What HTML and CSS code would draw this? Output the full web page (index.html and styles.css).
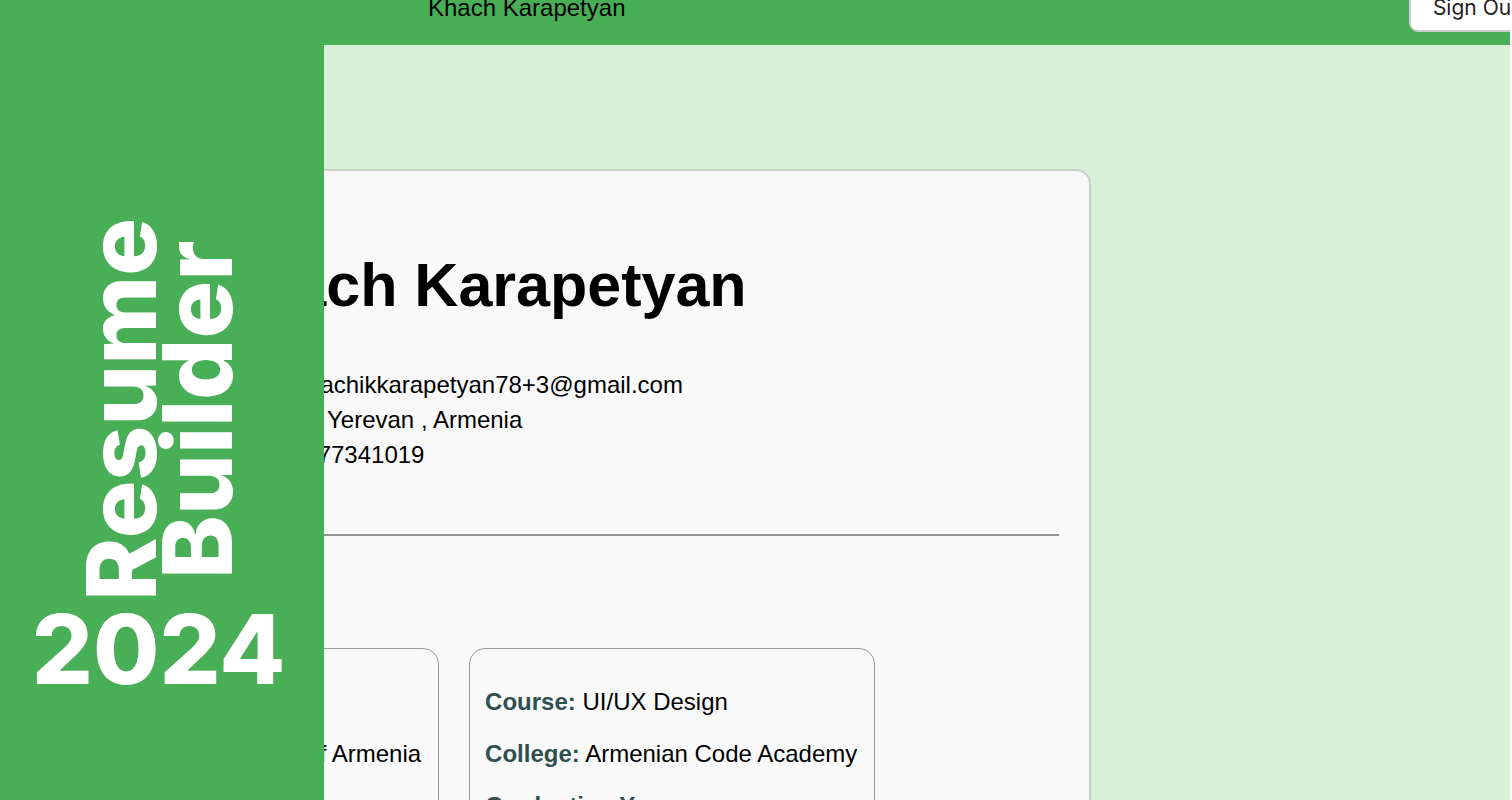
FILE: index.html
```
<!DOCTYPE html>
<html lang="en">
<head>
<meta charset="utf-8">
<title>Resume Builder</title>
<link rel="stylesheet" href="styles.css">
</head>
<body>
<div class="page">
  <aside class="sidebar">
    <div class="brand">Resume<br>Builder</div>
    <div class="year">2024</div>
  </aside>
  <header class="topbar">
    <span class="user">Khach Karapetyan</span>
    <button class="sign-out" type="button">Sign Out</button>
  </header>
  <main class="resume">
    <section class="person">
      <h1 class="name">Khach Karapetyan</h1>
      <dl class="contacts">
        <div class="contact"><dt>Email:</dt><dd>khachikkarapetyan78+3@gmail.com</dd></div>
        <div class="contact"><dt>Address:</dt><dd>Yerevan , Armenia</dd></div>
        <div class="contact"><dt>Phone:</dt><dd>077341019</dd></div>
      </dl>
    </section>
    <hr class="divider">
    <section class="education">
      <article class="school">
        <p><strong>Course:</strong> Design</p>
        <p><strong>College:</strong> University of Armenia</p>
        <p><strong>Graduation Year:</strong></p>
      </article>
      <article class="school">
        <p><strong>Course:</strong> UI/UX Design</p>
        <p><strong>College:</strong> Armenian Code Academy</p>
        <p><strong>Graduation Year:</strong></p>
      </article>
    </section>
  </main>
</div>
</body>
</html>
```
FILE: styles.css
```
* { box-sizing: border-box; }

body {
  margin: 0;
  background: #fff;
  color: #000;
  font: 24px/28px "Liberation Sans", Arial, sans-serif;
}

.page {
  height: 100vh;
  margin-right: 2px;
  overflow: hidden;
  background: #d7f0d8;
}

.sidebar {
  position: fixed;
  top: 0;
  bottom: 0;
  left: 0;
  z-index: 1;
  width: 324px;
  padding: 0 7px 107px 0;
  display: flex;
  flex-direction: column;
  align-items: center;
  justify-content: flex-end;
  background: #49af57;
  color: #fff;
  font: 800 96px/76px Inter, sans-serif;
}

.brand {
  margin-bottom: 4px;
  writing-mode: vertical-rl;
  transform: rotate(180deg);
  text-align: center;
}

.year { line-height: 88px; }

.topbar {
  height: 74px;
  margin-top: -29px;
  padding-left: 428px;
  display: flex;
  align-items: center;
  justify-content: space-between;
  background: #49af57;
}

.sign-out {
  height: 48px;
  margin-right: -32px;
  padding: 0 22px;
  border: 2px solid #ccc;
  border-radius: 9px;
  background: #fff;
  color: #222;
  font: 21px/26px Inter, sans-serif;
}

.resume {
  margin: 124px 419px 0 45px;
  padding: 78px 30px 30px;
  border: 2px solid #ccc;
  border-radius: 15px;
  background: #f9f9f9;
}

.person { padding-left: 134px; }

.name {
  margin: 0 0 46px;
  font-size: 61px;
  line-height: 72px;
}

.contacts { margin: 0 0 62px; }

.contact {
  display: flex;
  gap: 12px;
  line-height: 35px;
}

.contact dt { font-weight: bold; }
.contact dd { margin: 0; }

.divider {
  height: 2px;
  margin: 0 0 112px;
  border: 0;
  background: #949494;
}

.education {
  display: flex;
  gap: 30px;
}

.school {
  padding: 15px 17px 15px 15px;
  border: 1px solid #999;
  border-radius: 16px;
}

.school p { margin: 24px 0; }
.school strong { color: #2f4f4f; }
```
